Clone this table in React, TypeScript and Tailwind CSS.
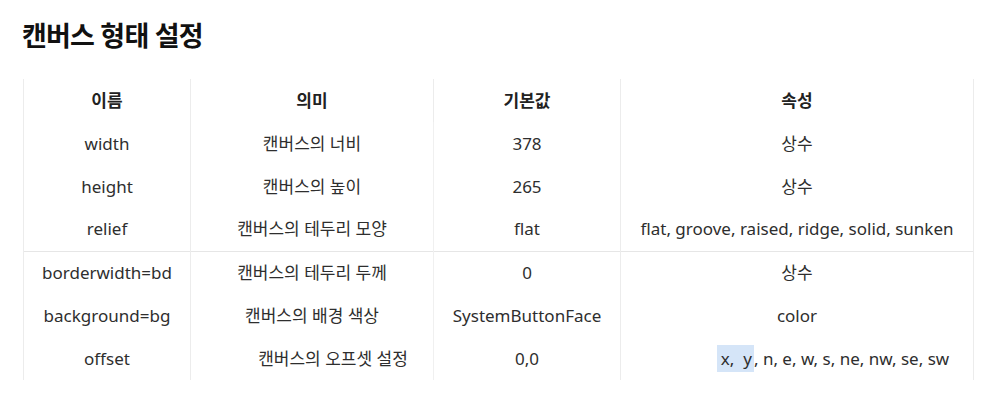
import React from "react";

const rows: [string, string, string, React.ReactNode][] = [
  ["width", "캔버스의 너비", "378", "상수"],
  ["height", "캔버스의 높이", "265", "상수"],
  ["relief", "캔버스의 테두리 모양", "flat", "flat, groove, raised, ridge, solid, sunken"],
  ["borderwidth=bd", "캔버스의 테두리 두께", "0", "상수"],
  ["background=bg", "캔버스의 배경 색상", "SystemButtonFace", "color"],
];

export default function App() {
  const font = { fontFamily: '"Noto Sans", "Noto Sans CJK KR", sans-serif' };
  return (
    <div className="w-[1002px] h-[406px] bg-white text-[#2e2e2e]" style={font}>
      <div className="pl-[22px] pt-[18px]">
        <h1 className="text-[27px] leading-[36px] font-bold text-[#111] tracking-[-0.8px]">캔버스 형태 설정</h1>
      </div>
      <div className="pl-[23px] pt-[25px]">
        <table className="border-collapse text-[17px] leading-[22px]">
          <colgroup>
            <col className="w-[167px]" />
            <col className="w-[243px]" />
            <col className="w-[187px]" />
            <col className="w-[353px]" />
          </colgroup>
          <thead>
            <tr className="h-[43px]">
              {["이름", "의미", "기본값", "속성"].map((h, i) => (
                <th
                  key={h}
                  className={`font-bold text-center text-[#222] border-l border-[#ececec] ${i === 3 ? "border-r" : ""}`}
                >
                  {h}
                </th>
              ))}
            </tr>
          </thead>
          <tbody>
            {rows.map((r, idx) => (
              <tr key={r[0] as string} className={`h-[43px] ${idx === 3 ? "border-t border-[#e6e6e6]" : ""}`}>
                <td className="text-center border-l border-[#ececec]">{r[0]}</td>
                <td className="text-center border-l border-[#ececec]">{r[1]}</td>
                <td className="text-center border-l border-[#f0f0f0]">{r[2]}</td>
                <td className="text-center border-l border-r border-[#ececec]">{r[3]}</td>
              </tr>
            ))}
            <tr className="h-[43px]">
              <td className="text-center border-l border-[#ececec]">offset</td>
              <td className="text-center border-l border-[#ececec] pl-[42px]">캔버스의 오프셋 설정</td>
              <td className="text-center border-l border-[#f0f0f0]">0,0</td>
              <td className="text-center border-l border-r border-[#ececec] pl-[72px]">
                <span className="bg-[#d5e5f8] py-[2px] pl-[4px] pr-[2px]">x,&nbsp; y</span>, n, e, w, s, ne, nw, se, sw
              </td>
            </tr>
          </tbody>
        </table>
      </div>
    </div>
  );
}
